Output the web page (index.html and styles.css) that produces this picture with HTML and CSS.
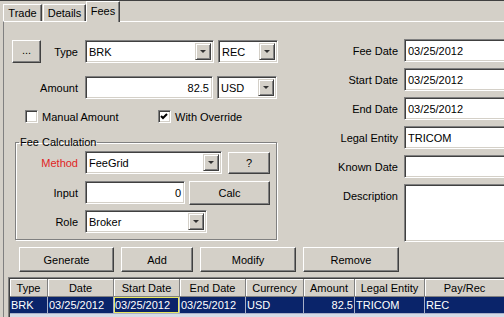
FILE: index.html
```html
<!DOCTYPE html>
<html lang="en">
  <head>
    <meta charset="UTF-8" />
    <meta name="viewport" content="width=device-width, initial-scale=1.0" />
    <title>Fees</title>
    <link rel="stylesheet" href="styles.css">
  </head>
  <body>
    <div class="tabs">
      <div class="tab trade">Trade</div>
      <div class="tab details">Details</div>
      <div class="tab fees active">Fees</div>
    </div>
    <div class="panel">
      <div class="main">
        <div class="left">
          <div class="row first">
            <div class="label split"><div class="btn dots">...</div><span>Type</span></div>
            <div class="combo w-type"><span class="val">BRK</span><span class="arrow"></span></div>
            <div class="combo w-small"><span class="val">REC</span><span class="arrow"></span></div>
          </div>
          <div class="row amount">
            <div class="label">Amount</div>
            <div class="field w-amount num">82.5</div>
            <div class="combo w-small"><span class="val">USD</span><span class="arrow"></span></div>
          </div>
          <div class="checks">
            <div class="check manual"><div class="box"></div>Manual Amount</div>
            <div class="check"><div class="box"><svg width="11" height="11" viewBox="0 0 11 11"><polyline points="2,5 4,7 8,3" fill="none" stroke="#000" stroke-width="2"/></svg></div>With Override</div>
          </div>
          <fieldset class="group">
            <legend>Fee Calculation</legend>
            <div class="row method">
              <div class="label red">Method</div>
              <div class="combo w-method"><span class="val">FeeGrid</span><span class="arrow"></span></div>
              <div class="btn help">?</div>
            </div>
            <div class="row input">
              <div class="label">Input</div>
              <div class="field w-input num">0</div>
              <div class="btn calc">Calc</div>
            </div>
            <div class="row role">
              <div class="label">Role</div>
              <div class="combo w-role"><span class="val">Broker</span><span class="arrow"></span></div>
            </div>
          </fieldset>
        </div>
        <div class="right">
          <div class="rrow"><div class="rlabel">Fee Date</div><div class="field w-date">03/25/2012</div></div>
          <div class="rrow"><div class="rlabel">Start Date</div><div class="field w-date">03/25/2012</div></div>
          <div class="rrow"><div class="rlabel">End Date</div><div class="field w-date">03/25/2012</div></div>
          <div class="rrow"><div class="rlabel">Legal Entity</div><div class="field w-date">TRICOM</div></div>
          <div class="rrow"><div class="rlabel">Known Date</div><div class="field w-date"></div></div>
          <div class="rrow desc"><div class="rlabel">Description</div><div class="field w-date tall"></div></div>
        </div>
      </div>
      <div class="actions">
        <div class="btn generate">Generate</div>
        <div class="btn add">Add</div>
        <div class="btn modify">Modify</div>
        <div class="btn remove">Remove</div>
      </div>
      <div class="grid">
        <div class="grid-in">
          <table>
            <colgroup>
              <col class="c-type"><col class="c-date"><col class="c-date"><col class="c-date">
              <col class="c-cur"><col class="c-amt"><col class="c-ent"><col class="c-pay">
            </colgroup>
            <tr>
              <th>Type</th><th>Date</th><th>Start Date</th><th>End Date</th>
              <th>Currency</th><th>Amount</th><th>Legal Entity</th><th>Pay/Rec</th>
            </tr>
            <tr class="sel">
              <td>BRK</td><td>03/25/2012</td><td class="focus">03/25/2012</td><td>03/25/2012</td>
              <td>USD</td><td class="num">82.5</td><td>TRICOM</td><td>REC</td>
            </tr>
          </table>
        </div>
      </div>
    </div>
  </body>
</html>
```

FILE: styles.css
```css
* {
    box-sizing: border-box;
}
body {
    margin: 0;
    width: 504px;
    height: 317px;
    overflow: hidden;
    background: #d4d0c8;
    border-top: 1px solid #404040;
    font-family: "Liberation Sans", Arial, sans-serif;
    font-size: 11px;
    color: #000;
}

/* tabs */
.tabs {
    display: flex;
    align-items: flex-end;
    height: 20px;
    padding-left: 3px;
}
.tab {
    height: 17px;
    display: flex;
    align-items: center;
    justify-content: center;
    border: 1px solid;
    border-color: #fff #404040 transparent #fff;
    border-bottom: none;
    box-shadow: inset -1px 0 0 #808080;
}
.trade {
    width: 39px;
    margin-right: 1px;
}
.details {
    width: 43px;
}
.fees {
    width: 34px;
}
.tab.active {
    height: 21px;
    margin-bottom: -1px;
    padding-bottom: 3px;
    background: #d4d0c8;
    position: relative;
    z-index: 1;
}

.panel {
    margin-left: 3px;
    height: 296px;
    border-top: 1px solid #fff;
    border-left: 1px solid #808080;
}
.main {
    display: flex;
}
.left {
    width: 276px;
    padding-top: 18px;
}
.right {
    flex: 1;
    padding-top: 17px;
}

/* form rows */
.row {
    display: flex;
    align-items: center;
    height: 23px;
}
.amount {
    margin-top: 13px;
}
.label {
    width: 74px;
    margin-right: 7px;
    text-align: right;
}
.split {
    display: flex;
    justify-content: space-between;
    align-items: center;
}
.red {
    color: #e02424;
}

/* sunken controls */
.field, .combo {
    height: 23px;
    background: #fff;
    border: 1px solid;
    border-color: #808080 #fff #fff #808080;
    box-shadow: inset 1px 1px 0 #404040, inset -1px -1px 0 #d4d0c8;
    padding: 0 3px;
    display: flex;
    align-items: center;
    white-space: nowrap;
    overflow: hidden;
}
.num {
    justify-content: flex-end;
}
.combo {
    padding: 2px 2px 2px 3px;
}
.combo .val {
    flex: 1;
}
.arrow {
    width: 16px;
    height: 100%;
    background: #d4d0c8;
    border: 1px solid;
    border-color: #d4d0c8 #404040 #404040 #d4d0c8;
    box-shadow: inset 1px 1px 0 #fff, inset -1px -1px 0 #808080;
    display: flex;
    align-items: center;
    justify-content: center;
}
.arrow::after {
    content: "";
    border-left: 3px solid transparent;
    border-right: 3px solid transparent;
    border-top: 3px solid #333;
}
.w-type {
    width: 129px;
    margin-right: 4px;
}
.w-small {
    width: 60px;
}
.w-amount {
    width: 128px;
    margin-right: 4px;
}
.w-method {
    width: 137px;
    margin-right: 6px;
}
.w-input {
    width: 100px;
    margin-right: 4px;
}
.w-role {
    width: 122px;
}
.w-date {
    width: 110px;
}
.tall {
    height: 58px;
}

/* raised buttons */
.btn {
    height: 23px;
    background: #d4d0c8;
    border: 1px solid;
    border-color: #fff #404040 #404040 #fff;
    box-shadow: inset -1px -1px 0 #808080;
    display: flex;
    align-items: center;
    justify-content: center;
}
.dots {
    width: 29px;
    margin-left: 8px;
    padding-bottom: 3px;
}
.help {
    width: 42px;
    height: 22px;
}
.calc {
    width: 81px;
    height: 24px;
}

/* checkboxes */
.checks {
    display: flex;
    align-items: center;
    margin-top: 11px;
    padding-left: 21px;
    height: 13px;
}
.check {
    display: flex;
    align-items: center;
}
.manual {
    width: 133px;
}
.box {
    width: 13px;
    height: 13px;
    margin-right: 4px;
    background: #fff;
    border: 1px solid;
    border-color: #808080 #fff #fff #808080;
    box-shadow: inset 1px 1px 0 #404040, inset -1px -1px 0 #d4d0c8;
}
.box svg {
    display: block;
}

/* group box */
.group {
    margin: 13px 0 0 11px;
    width: 262px;
    padding: 0 0 6px 0;
    border: 1px solid #808080;
    box-shadow: inset 1px 1px 0 #fff, 1px 1px 0 #fff;
}
.group legend {
    padding: 0 1px;
    margin-left: 3px;
    line-height: 13px;
}
.group .label {
    width: 62px;
}
.method {
    margin-top: 2px;
}
.input {
    margin-top: 7px;
}
.role {
    margin-top: 6px;
}

/* right column */
.rrow {
    display: flex;
    align-items: center;
    height: 23px;
    margin-bottom: 6px;
}
.rlabel {
    width: 120px;
    margin-right: 6px;
    text-align: right;
}
.desc {
    align-items: flex-start;
    height: 58px;
    margin-bottom: 0;
}
.desc .rlabel {
    padding-top: 6px;
}

/* action buttons */
.actions {
    display: flex;
    margin-top: 5px;
    padding-left: 15px;
}
.actions .btn {
    height: 25px;
    margin-right: 7px;
}
.generate {
    width: 95px;
}
.add {
    width: 72px;
}
.modify {
    width: 96px;
}
.remove {
    width: 96px;
}

/* table */
.grid {
    margin: 5px 0 0 4px;
    height: 40px;
    border-top: 1px solid #808080;
    border-left: 1px solid #808080;
}
.grid-in {
    height: 100%;
    border-top: 1px solid #404040;
    border-left: 1px solid #404040;
    background: #d6dbe6;
    overflow: hidden;
}
table {
    table-layout: fixed;
    border-collapse: separate;
    border-spacing: 0;
    width: 495px;
}
.c-type { width: 38px; }
.c-date { width: 66px; }
.c-cur { width: 58px; }
.c-amt { width: 51px; }
.c-ent { width: 70px; }
.c-pay { width: 80px; }
th {
    height: 18px;
    padding: 0;
    font-weight: normal;
    text-align: center;
    background: #d4d0c8;
    border-right: 1px solid #808080;
    border-bottom: 1px solid #808080;
    box-shadow: inset 1px 1px 0 #fff;
    white-space: nowrap;
}
td {
    height: 17px;
    padding: 0 1px;
    background: #0a246a;
    color: #fff;
    border-right: 1px solid #a8b0c8;
    border-bottom: 1px solid #a8b0c8;
    white-space: nowrap;
    overflow: hidden;
}
td.num {
    text-align: right;
}
td.focus {
    box-shadow: inset 0 0 0 1px #e8e860;
}
```
